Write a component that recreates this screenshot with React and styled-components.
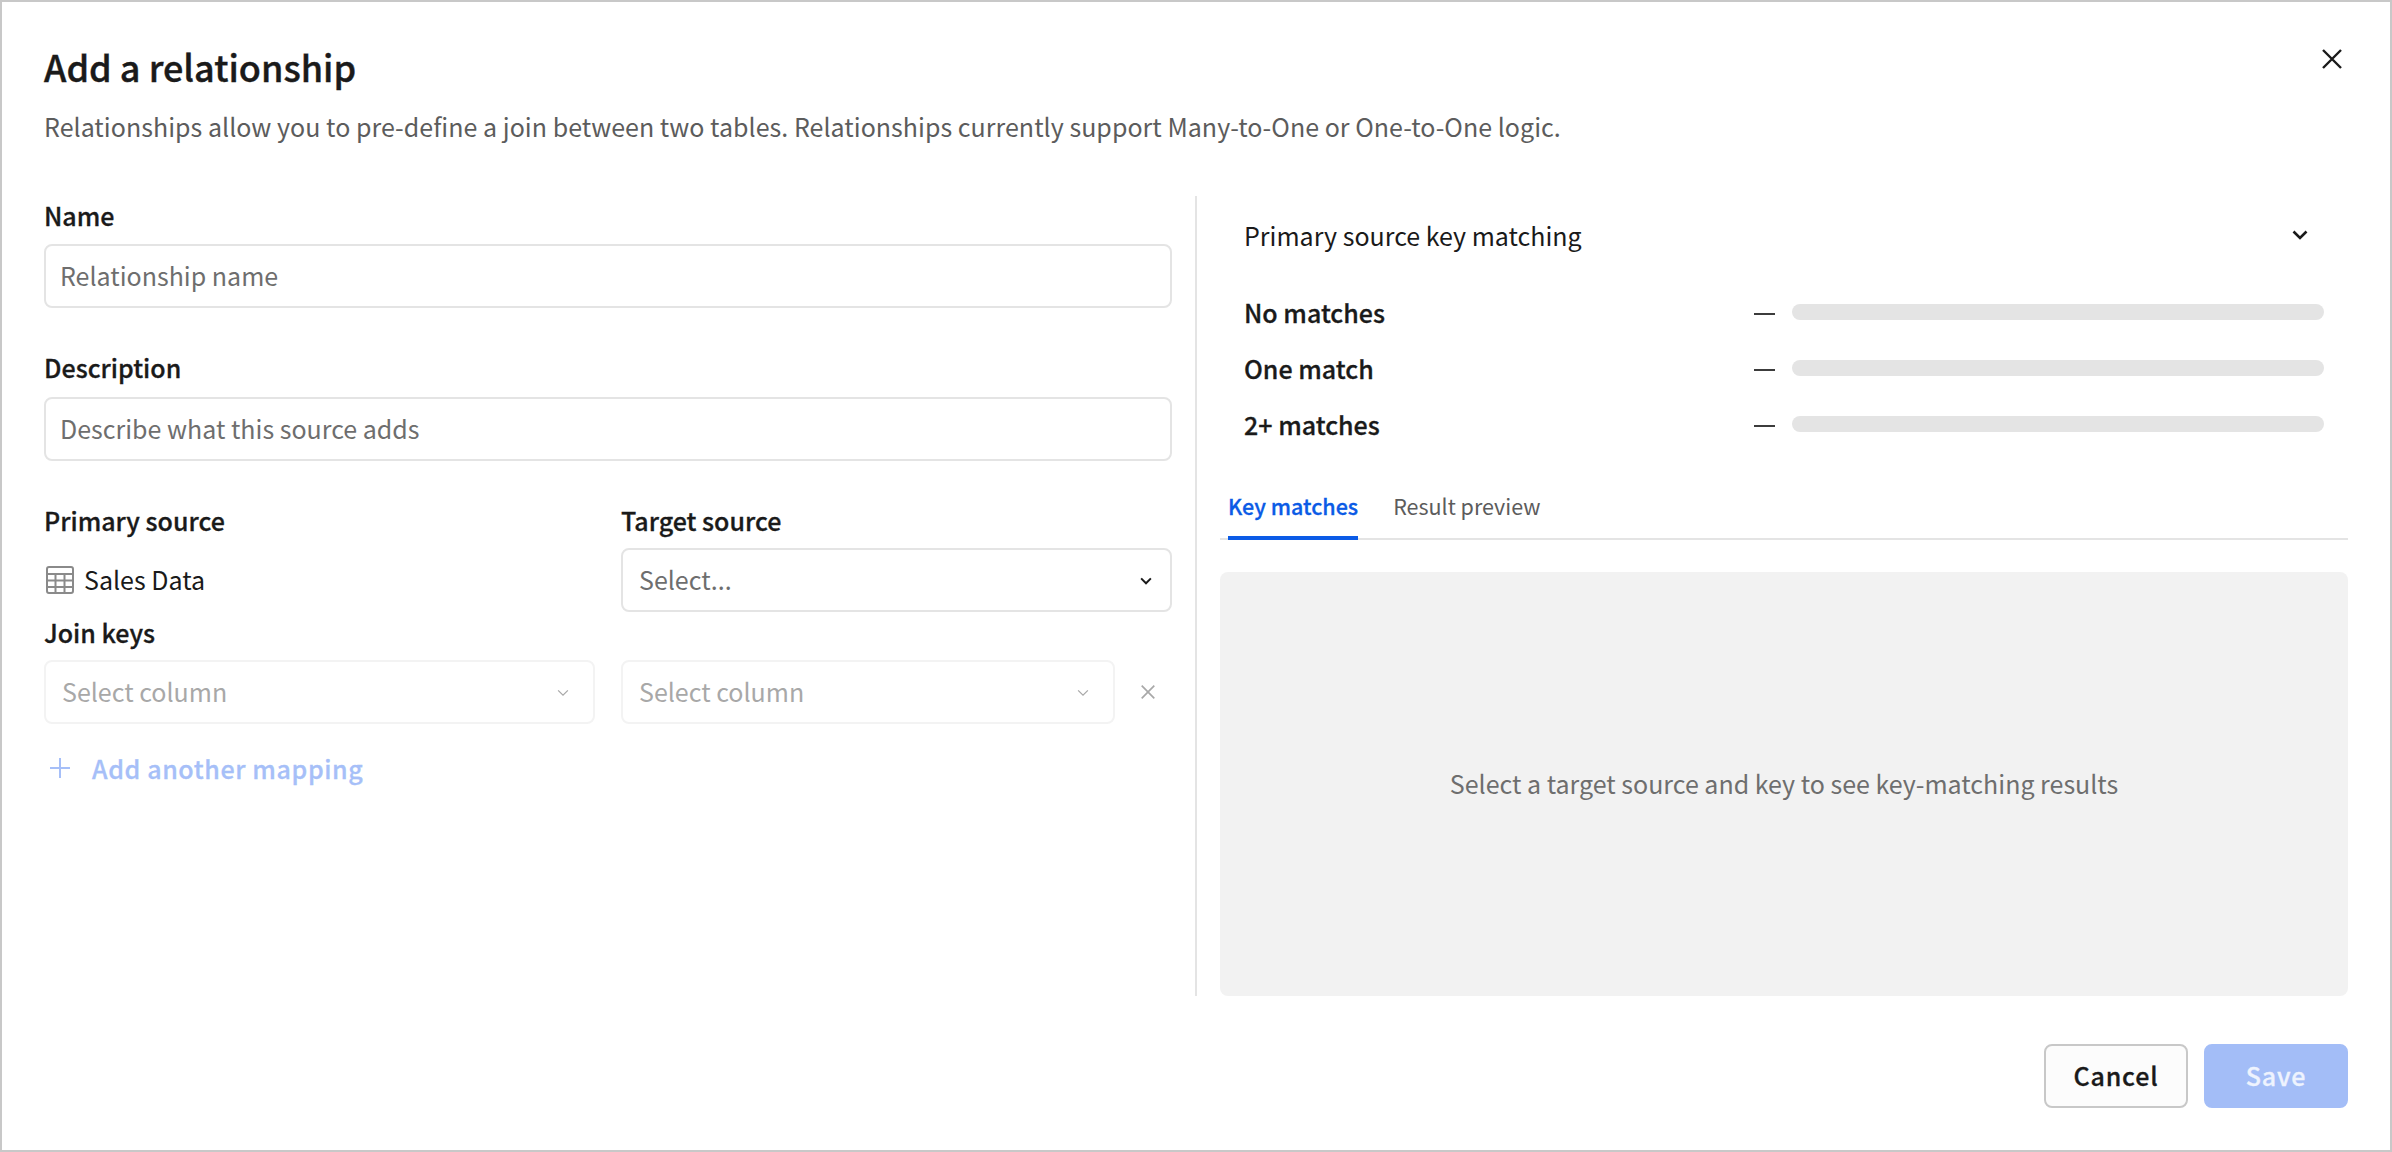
import React from "react";
import styled, { createGlobalStyle } from "styled-components";

const Global = createGlobalStyle`
  * { box-sizing: border-box; }
  html, body { margin: 0; padding: 0; background: #fff; }
  body { font-family: "Noto Sans CJK JP", "Liberation Sans", sans-serif; color: #1a1a1a; }
  input { font-family: inherit; }
`;

const Dialog = styled.div`
  width: 2392px;
  height: 1152px;
  border: 2px solid #c8c8c8;
  background: #fff;
  padding: 0 42px 42px;
  display: flex;
  flex-direction: column;
  position: relative;
`;
const Header = styled.header`
  height: 194px;
  padding-top: 39px;
`;
const Title = styled.h1`
  margin: 0;
  font-size: 36px;
  line-height: 50px;
  font-weight: 500;
  -webkit-text-stroke: 0.4px currentColor;
  color: #1a1a1a;
`;
const Subtitle = styled.p`
  margin: 17px 0 0;
  font-size: 25px;
  line-height: 36px;
  letter-spacing: 0.03px;
  color: #5c5c5c;
`;
const CloseButton = styled.button`
  position: absolute;
  top: 47px;
  right: 48px;
  width: 20px;
  height: 20px;
  padding: 0;
  border: 0;
  background: none;
  color: #1a1a1a;
  display: block;
`;
const Body = styled.div`
  display: grid;
  grid-template-columns: 1151px 1153px;
  height: 800px;
`;
const LeftPane = styled.section`
  padding: 1px 23px 0 0;
  display: flex;
  flex-direction: column;
`;
const RightPane = styled.section`
  border-left: 2px solid #e4e4e4;
  padding-left: 23px;
  display: flex;
  flex-direction: column;
`;
const FieldLabel = styled.label`
  display: block;
  font-size: 25px;
  line-height: 36px;
  font-weight: 500;
  -webkit-text-stroke: 0.3px currentColor;
  color: #1a1a1a;
  margin-top: ${(p) => p.$mt || 0}px;
`;
const Field = styled.div`
  margin-bottom: ${(p) => p.$mb || 0}px;
`;
const TextInput = styled.input`
  display: block;
  width: 100%;
  height: 64px;
  margin-top: ${(p) => p.$mt}px;
  border: 2px solid #e4e4e4;
  border-radius: 8px;
  background: #fff;
  padding: 0 14px 3px;
  font-size: 25px;
  color: #1a1a1a;
  outline: none;
  &::placeholder { color: #6e6e6e; opacity: 1; }
`;
const SourceRow = styled.div`
  display: grid;
  grid-template-columns: 551px 551px;
  column-gap: 26px;
`;
const StaticValue = styled.div`
  height: 64px;
  margin-top: 10px;
  display: flex;
  align-items: center;
  gap: 10px;
  font-size: 25px;
  padding-left: 2px;
  color: #1a1a1a;
`;
const StaticText = styled.span`
  margin-bottom: 3px;
`;
const SelectBox = styled.div`
  height: 64px;
  margin-top: ${(p) => p.$mt || 0}px;
  border: 2px solid ${(p) => (p.$disabled ? "#f3f3f3" : "#e4e4e4")};
  border-radius: 8px;
  padding: 0 ${(p) => (p.$disabled ? 24 : 18)}px 3px 16px;
  display: flex;
  align-items: center;
  justify-content: space-between;
  font-size: 25px;
  color: ${(p) => (p.$disabled ? "#a8a8a8" : "#6e6e6e")};
  background: #fff;
`;
const ChevronSlot = styled.span`
  display: flex;
  margin-top: 4px;
  color: ${(p) => (p.$muted ? "#a8a8a8" : "#1a1a1a")};
`;
const MapRow = styled.div`
  display: grid;
  grid-template-columns: 551px 494px 20px;
  column-gap: 26px;
  align-items: center;
  margin-top: 10px;
`;
const MapRemove = styled.div`
  width: 14px;
  height: 14px;
  color: #a8a8a8;
  display: flex;
`;
const AddMapping = styled.div`
  margin-top: 26px;
  display: flex;
  align-items: center;
  gap: 22px;
  padding-left: 6px;
  font-size: 25px;
  line-height: 36px;
  font-weight: 500;
  -webkit-text-stroke: 0.3px currentColor;
  letter-spacing: 0.62px;
  color: #a6bff8;
`;
const Matching = styled.div`
  padding: 0 24px;
`;
const MatchingHead = styled.div`
  height: 78px;
  margin-bottom: 10px;
  display: flex;
  align-items: center;
  justify-content: space-between;
  padding-right: 16px;
  font-size: 25px;
  color: #1a1a1a;
`;
const MatchRow = styled.div`
  display: grid;
  grid-template-columns: 510px 21px 549px;
  height: 56px;
  align-items: center;
`;
const MatchLabel = styled.span`
  font-size: 25px;
  font-weight: 500;
  -webkit-text-stroke: 0.3px currentColor;
  margin-bottom: 1px;
`;
const Dash = styled.span`
  width: 21px;
  height: 2px;
  background: #3c3c3c;
  margin-top: 4px;
`;
const Track = styled.div`
  height: 16px;
  margin-left: 17px;
  border-radius: 8px;
  background: #e4e4e4;
`;
const Tabs = styled.div`
  display: flex;
  gap: 35px;
  height: 68px;
  margin-top: 20px;
  padding-left: 8px;
  border-bottom: 2px solid #e4e4e4;
`;
const Tab = styled.div`
  font-size: 21.5px;
  line-height: 34px;
  padding-top: 17px;
  height: 68px;
  color: ${(p) => (p.$active ? "#0b5be6" : "#5c5c5c")};
  font-weight: ${(p) => (p.$active ? 500 : 400)};
  -webkit-text-stroke: ${(p) => (p.$active ? "0.3px currentColor" : "0")};
  border-bottom: 4px solid ${(p) => (p.$active ? "#0b5be6" : "transparent")};
`;
const EmptyPanel = styled.div`
  margin-top: 32px;
  flex: 1;
  border-radius: 8px;
  background: #f2f2f2;
  padding-bottom: 3px;
  display: flex;
  align-items: center;
  justify-content: center;
  font-size: 25px;
  color: #6e6e6e;
`;
const Footer = styled.footer`
  margin-top: 48px;
  display: flex;
  justify-content: flex-end;
  gap: 16px;
`;
const Button = styled.button`
  width: 144px;
  height: 64px;
  padding: 0 0 3px;
  border-radius: 8px;
  font-family: inherit;
  font-size: 25px;
  font-weight: 500;
  -webkit-text-stroke: 0.3px currentColor;
  letter-spacing: 0.8px;
  border: 2px solid ${(p) => (p.$primary ? "#a3bdf7" : "#c8c8c8")};
  background: ${(p) => (p.$primary ? "#a3bdf7" : "#fcfcfc")};
  color: ${(p) => (p.$primary ? "#eef3fe" : "#1a1a1a")};
`;

const Chevron = ({ size = 16, w = 2.6 }) => (
  <svg width={size} height={size} viewBox="0 0 16 16" fill="none" stroke="currentColor" strokeWidth={w}>
    <path d="M1.5 4.5 8 11l6.5-6.5" />
  </svg>
);
const Cross = ({ size = 20, w = 2.4 }) => (
  <svg width={size} height={size} viewBox="0 0 20 20" fill="none" stroke="currentColor" strokeWidth={w} style={{ display: "block" }}>
    <path d="M1 1 19 19M19 1 1 19" />
  </svg>
);
const TableIcon = () => (
  <svg width="28" height="28" viewBox="0 0 28 28" fill="none" stroke="#8a8a8a" strokeWidth="2">
    <rect x="1" y="1" width="26" height="26" rx="2" />
    <path d="M1 8h26M1 14.5h26M1 21h26M9.5 8v19M18.5 8v19" />
  </svg>
);
const Plus = () => (
  <svg width="20" height="20" viewBox="0 0 20 20" fill="none" stroke="#a6bff8" strokeWidth="2">
    <path d="M10 0v20M0 10h20" />
  </svg>
);

export default function App() {
  return (
    <>
      <Global />
      <Dialog>
        <Header>
          <Title>Add a relationship</Title>
          <Subtitle>
            Relationships allow you to pre-define a join between two tables. Relationships currently support Many-to-One or One-to-One logic.
          </Subtitle>
        </Header>
        <CloseButton aria-label="Close"><Cross /></CloseButton>
        <Body>
          <LeftPane>
            <Field $mb={41}>
              <FieldLabel>Name</FieldLabel>
              <TextInput $mt={11} placeholder="Relationship name" />
            </Field>
            <Field $mb={41}>
              <FieldLabel>Description</FieldLabel>
              <TextInput $mt={12} placeholder="Describe what this source adds" />
            </Field>
            <SourceRow>
              <div>
                <FieldLabel>Primary source</FieldLabel>
                <StaticValue><TableIcon /><StaticText>Sales Data</StaticText></StaticValue>
              </div>
              <div>
                <FieldLabel>Target source</FieldLabel>
                <SelectBox $mt={10}>Select...<ChevronSlot><Chevron size={12} /></ChevronSlot></SelectBox>
              </div>
            </SourceRow>
            <FieldLabel $mt={2}>Join keys</FieldLabel>
            <MapRow>
              <SelectBox $disabled>Select column<ChevronSlot $muted><Chevron size={12} w={1.6} /></ChevronSlot></SelectBox>
              <SelectBox $disabled>Select column<ChevronSlot $muted><Chevron size={12} w={1.6} /></ChevronSlot></SelectBox>
              <MapRemove><Cross size={14} w={2.4} /></MapRemove>
            </MapRow>
            <AddMapping><Plus />Add another mapping</AddMapping>
          </LeftPane>
          <RightPane>
            <Matching>
              <MatchingHead>Primary source key matching<Chevron /></MatchingHead>
              <MatchRow><MatchLabel>No matches</MatchLabel><Dash /><Track /></MatchRow>
              <MatchRow><MatchLabel>One match</MatchLabel><Dash /><Track /></MatchRow>
              <MatchRow><MatchLabel>2+ matches</MatchLabel><Dash /><Track /></MatchRow>
            </Matching>
            <Tabs>
              <Tab $active>Key matches</Tab>
              <Tab>Result preview</Tab>
            </Tabs>
            <EmptyPanel>Select a target source and key to see key-matching results</EmptyPanel>
          </RightPane>
        </Body>
        <Footer>
          <Button>Cancel</Button>
          <Button $primary>Save</Button>
        </Footer>
      </Dialog>
    </>
  );
}
